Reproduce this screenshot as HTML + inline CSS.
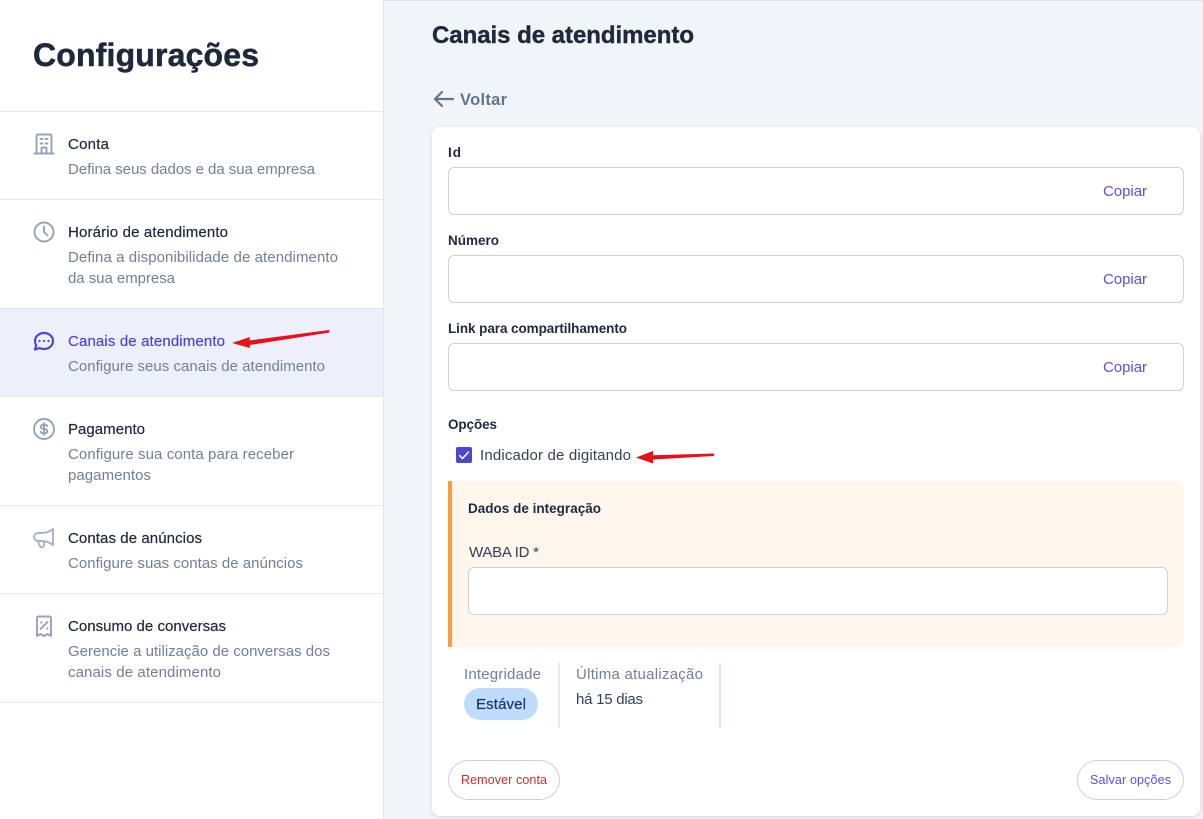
<!DOCTYPE html>
<html lang="pt"><head><meta charset="utf-8"><title>Configurações</title>
<style>
html,body{margin:0;padding:0;width:1203px;height:819px;overflow:hidden;background:#f1f4f9}
body{position:relative;font-family:"Liberation Sans",sans-serif}
.a{position:absolute;box-sizing:border-box}
svg{position:absolute;left:0;top:0}
text{font-family:"Liberation Sans",sans-serif}
.t{font-size:15px;fill:#1e293b;stroke:#1e293b;stroke-width:.2px}
.d{font-size:15px;fill:#718096}
.l{font-size:13.500px;font-weight:700;fill:#1e293b}
.c{font-size:15px;fill:#5b4fd6}
.i{fill:none;stroke:#94a3b8;stroke-width:1.900;stroke-linecap:round;stroke-linejoin:round}
</style></head><body>
<div class="a" style="left:0;top:0;width:384px;height:819px;background:#fff;border-right:1px solid #e2e8f0"></div>
<div class="a" style="left:0;top:309px;width:383px;height:87px;background:#edf0fb"></div>
<div class="a" style="left:0;top:111px;width:383px;height:1px;background:#e2e8f0"></div>
<div class="a" style="left:0;top:199px;width:383px;height:1px;background:#e2e8f0"></div>
<div class="a" style="left:0;top:308px;width:383px;height:1px;background:#e2e8f0"></div>
<div class="a" style="left:0;top:396px;width:383px;height:1px;background:#e2e8f0"></div>
<div class="a" style="left:0;top:505px;width:383px;height:1px;background:#e2e8f0"></div>
<div class="a" style="left:0;top:593px;width:383px;height:1px;background:#e2e8f0"></div>
<div class="a" style="left:0;top:702px;width:383px;height:1px;background:#e2e8f0"></div>
<div class="a" style="left:384px;top:0;width:819px;height:1px;background:#e2e8f0"></div>

<div class="a" style="left:432px;top:127px;width:768px;height:689px;background:#fff;border-radius:8px;box-shadow:0 1px 3px rgba(15,23,42,.14)"></div>
<div class="a" style="left:448px;top:167px;width:736px;height:48px;background:#fff;border:1px solid #cdd1d8;border-radius:6px"></div>
<div class="a" style="left:448px;top:255px;width:736px;height:48px;background:#fff;border:1px solid #cdd1d8;border-radius:6px"></div>
<div class="a" style="left:448px;top:343px;width:736px;height:48px;background:#fff;border:1px solid #cdd1d8;border-radius:6px"></div>
<div class="a" style="left:456px;top:447px;width:16px;height:16px;background:#4f46cf;border-radius:2px"></div>
<div class="a" style="left:448px;top:481px;width:736px;height:166px;background:#fff6ee;border-left:4px solid #fb9d45;border-radius:0 8px 8px 0"></div>
<div class="a" style="left:468px;top:567px;width:700px;height:48px;background:#fff;border:1px solid #cdd1d8;border-radius:6px"></div>
<div class="a" style="left:464px;top:688px;width:74px;height:32px;background:#bfdbfe;border-radius:16px"></div>
<div class="a" style="left:558px;top:663px;width:2px;height:65px;background:#e2e8f0"></div>
<div class="a" style="left:719px;top:663px;width:2px;height:65px;background:#e2e8f0"></div>
<div class="a" style="left:448px;top:760px;width:112px;height:40px;background:#fff;border:1px solid #cdd1d8;border-radius:20px"></div>
<div class="a" style="left:1077px;top:760px;width:107px;height:40px;background:#fff;border:1px solid #cdd1d8;border-radius:20px"></div>

<svg width="1203" height="819" viewBox="0 0 1203 819" xmlns="http://www.w3.org/2000/svg">
<text x="33" y="66" font-size="32" font-weight="700" fill="#1e293b" stroke="#1e293b" stroke-width=".5" textLength="226">Configurações</text>

<text class="t" x="68" y="149" textLength="41">Conta</text>
<text class="d" x="68" y="174" textLength="247">Defina seus dados e da sua empresa</text>
<text class="t" x="68" y="237" textLength="160">Horário de atendimento</text>
<text class="d" x="68" y="262" textLength="270">Defina a disponibilidade de atendimento</text>
<text class="d" x="68" y="283" textLength="107">da sua empresa</text>
<text class="t" x="68" y="346" textLength="157" style="fill:#4f46cf;stroke:#4f46cf">Canais de atendimento</text>
<text class="d" x="68" y="371" textLength="257">Configure seus canais de atendimento</text>
<text class="t" x="68" y="434" textLength="77">Pagamento</text>
<text class="d" x="68" y="459" textLength="226">Configure sua conta para receber</text>
<text class="d" x="68" y="480" textLength="83">pagamentos</text>
<text class="t" x="68" y="543" textLength="134">Contas de anúncios</text>
<text class="d" x="68" y="568" textLength="235">Configure suas contas de anúncios</text>
<text class="t" x="68" y="631" textLength="158">Consumo de conversas</text>
<text class="d" x="68" y="656" textLength="262">Gerencie a utilização de conversas dos</text>
<text class="d" x="68" y="677" textLength="153">canais de atendimento</text>

<path class="i" d="M36.500 153.500V136a1.500 1.500 0 011.500-1.500h12a1.500 1.500 0 011.500 1.500v17.500M34.500 153.500h19M40.500 139h2M45.500 139h2M40.500 143.500h2M45.500 143.500h2M41.500 153.500v-5a1 1 0 011-1h3a1 1 0 011 1v5"/>
<path class="i" d="M44 226.500v5.500l3.500 3.500M53.500 232a9.500 9.500 0 11-19 0 9.500 9.500 0 0119 0z"/>
<path class="i" style="stroke:#4f46cf;stroke-width:2.200" d="M39.500 341h.01M44 341h.01M48.500 341h.01M53 341c0 4.500-4 8-9 8-1.600 0-3-.3-4.300-.9L35 349.500l1.200-4C35.400 344.100 35 342.600 35 341c0-4.500 4-8 9-8s9 3.500 9 8z"/>
<g transform="translate(30.67,415.67) scale(1.111)"><path class="i" style="stroke-width:1.700" d="M15 9.500C14.500 8.500 13.300 8 12 8c-1.657 0-3 .895-3 2s1.343 2 3 2 3 .895 3 2-1.343 2-3 2c-1.300 0-2.500-.5-3-1.500M12 6.800v10.400M21 12a9 9 0 11-18 0 9 9 0 0118 0z"/></g>
<path class="i" style="stroke:#a7b3c4" d="M53 529v16c-3-2.500-7-4-12-4h-3a4 4 0 010-8h3c5 0 9-1.500 12-4zM44 541v4a2.200 2.200 0 01-4.300.6L37.500 540.500"/>
<path class="i" d="M37 636V618a1.500 1.500 0 011.500-1.500h11A1.500 1.500 0 0151 618v18l-3.500-2-3.500 2-3.500-2zM40.500 629l7-7M41 622.500h.5M47 628.500h.5"/>

<text x="432" y="43" font-size="24" font-weight="700" fill="#1e293b" stroke="#1e293b" stroke-width=".4" textLength="262">Canais de atendimento</text>
<path d="M453 99H435M442 92l-7 7 7 7" fill="none" stroke="#64748b" stroke-width="2.200" stroke-linecap="round" stroke-linejoin="round"/>
<text x="460" y="105" font-size="16.500" font-weight="700" fill="#64748b" textLength="47">Voltar</text>

<text class="l" x="448" y="157" textLength="13">Id</text>
<text class="l" x="448" y="245" textLength="51">Número</text>
<text class="l" x="448" y="333" textLength="179">Link para compartilhamento</text>
<text class="c" x="1103" y="196" textLength="44">Copiar</text>
<text class="c" x="1103" y="284" textLength="44">Copiar</text>
<text class="c" x="1103" y="372" textLength="44">Copiar</text>

<text class="l" x="448" y="429" textLength="49">Opções</text>
<path d="M459.500 455.500l3 3 6-6.500" fill="none" stroke="#fff" stroke-width="1.500" stroke-linecap="round" stroke-linejoin="round"/>
<text x="480" y="460" font-size="15" fill="#374151" textLength="151">Indicador de digitando</text>

<text class="l" x="468" y="513" textLength="133">Dados de integração</text>
<text x="469" y="557" font-size="15" fill="#334155" textLength="70">WABA ID *</text>

<text class="d" x="464" y="679" textLength="77">Integridade</text>
<text x="476" y="709" font-size="15" fill="#1e3a5f" stroke="#1e3a5f" stroke-width=".25" textLength="50">Estável</text>
<text class="d" x="576" y="679" textLength="127">Última atualização</text>
<text x="576" y="704" font-size="15" fill="#334155" textLength="67">há 15 dias</text>

<text x="461" y="784" font-size="12.500" fill="#c53030" textLength="86">Remover conta</text>
<text x="1090" y="784" font-size="12.500" fill="#5b4fd6" textLength="81">Salvar opções</text>

<polygon points="232,343 250,337 249.500,340.500 329,330 329.500,332.500 249.800,345 250,348" fill="#e8101a"/>
<polygon points="636,457.500 653,451 653,455.300 714,453.500 714,456 653,459.500 653,463.500" fill="#e8101a"/>
</svg>
</body></html>
